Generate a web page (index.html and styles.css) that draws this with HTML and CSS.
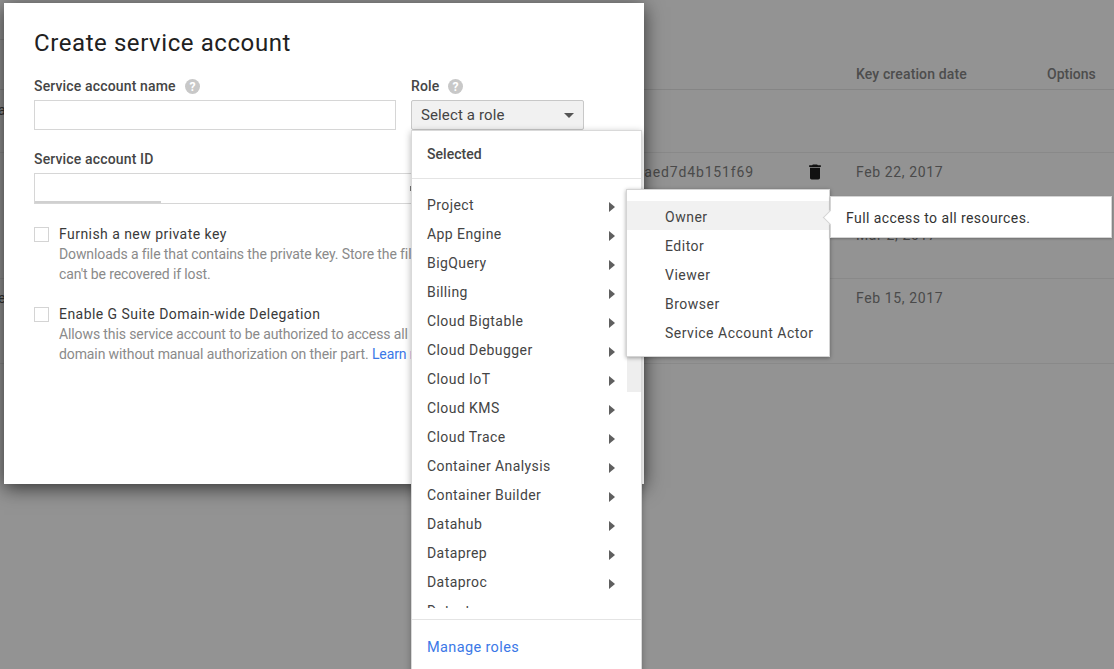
FILE: index.html
```html
<!DOCTYPE html>
<html lang="en">
<head>
<meta charset="utf-8">
<title>Create service account</title>
<link rel="stylesheet" href="styles.css">
</head>
<body>
<main class="page">
  <div class="top-rule"></div>
  <div class="table-head"><span class="col-date">Key creation date</span><span class="col-options">Options</span></div>
  <div class="row row-a"><span class="edge">a</span></div>
  <div class="row row-b">
    <span class="key-id">laed7d4b151f69</span>
    <svg class="trash" viewBox="0 0 24 24"><path d="M6 19c0 1.1.9 2 2 2h8c1.1 0 2-.9 2-2V7H6v12zM19 4h-3.5l-1-1h-5l-1 1H5v2h14V4z"/></svg>
    <span class="col-date">Feb 22, 2017</span>
    <span class="col-date second">Mar 2, 2017</span>
  </div>
  <div class="row row-c"><span class="edge">e</span><span class="col-date">Feb 15, 2017</span></div>
</main>

<section class="dialog">
  <h1 class="dialog-title">Create service account</h1>
  <div class="field-grid">
    <div class="field">
      <label class="field-label">Service account name
        <svg class="help" viewBox="0 0 16 16"><circle cx="8" cy="8" r="8"/><text x="8" y="12.5" text-anchor="middle">?</text></svg>
      </label>
      <div class="input"></div>
    </div>
    <div class="field">
      <label class="field-label">Role
        <svg class="help" viewBox="0 0 16 16"><circle cx="8" cy="8" r="8"/><text x="8" y="12.5" text-anchor="middle">?</text></svg>
      </label>
      <div class="select">Select a role<span class="caret"></span></div>
    </div>
  </div>
  <div class="field id-field">
    <label class="field-label">Service account ID</label>
    <div class="input input-id"><span class="id-rule"></span><span class="id-mark"></span></div>
  </div>
  <div class="check-row">
    <span class="checkbox"></span>
    <div class="check-text">
      <div class="check-title">Furnish a new private key</div>
      <div class="check-help">Downloads a file that contains the private key. Store the file securely because this key<br>can't be recovered if lost.</div>
    </div>
  </div>
  <div class="check-row">
    <span class="checkbox"></span>
    <div class="check-text">
      <div class="check-title">Enable G Suite Domain-wide Delegation</div>
      <div class="check-help">Allows this service account to be authorized to access all users' data in a G Suite<br>domain without manual authorization on their part. <a class="link">Learn more</a></div>
    </div>
  </div>
</section>

<div class="role-menu">
  <div class="selected-head">Selected</div>
  <div class="role-list">
    <div class="role-scroll">
      <div class="role-item">Project<span class="arrow"></span></div>
      <div class="role-item">App Engine<span class="arrow"></span></div>
      <div class="role-item">BigQuery<span class="arrow"></span></div>
      <div class="role-item">Billing<span class="arrow"></span></div>
      <div class="role-item">Cloud Bigtable<span class="arrow"></span></div>
      <div class="role-item">Cloud Debugger<span class="arrow"></span></div>
      <div class="role-item">Cloud IoT<span class="arrow"></span></div>
      <div class="role-item">Cloud KMS<span class="arrow"></span></div>
      <div class="role-item">Cloud Trace<span class="arrow"></span></div>
      <div class="role-item">Container Analysis<span class="arrow"></span></div>
      <div class="role-item">Container Builder<span class="arrow"></span></div>
      <div class="role-item">Datahub<span class="arrow"></span></div>
      <div class="role-item">Dataprep<span class="arrow"></span></div>
      <div class="role-item">Dataproc<span class="arrow"></span></div>
      <div class="role-item">Datastore<span class="arrow"></span></div>
      <span class="scroll-thumb"></span>
    </div>
  </div>
  <div class="manage"><a class="link">Manage roles</a></div>
</div>

<div class="sub-menu">
  <div class="sub-item active">Owner</div>
  <div class="sub-item">Editor</div>
  <div class="sub-item">Viewer</div>
  <div class="sub-item">Browser</div>
  <div class="sub-item">Service Account Actor</div>
</div>

<div class="tip">Full access to all resources.</div>
</body>
</html>
```
FILE: styles.css
```css
* { box-sizing: border-box; }
html, body { margin: 0; height: 100%; overflow: hidden; }
body { background: #939393; font-family: Roboto, "Liberation Sans", sans-serif; font-size: 14px; color: #212121; position: relative; width: 1114px; height: 669px; }

.page { display: flex; flex-direction: column; color: #4a4a4a; }
.top-rule { height: 40px; width: 10px; border-bottom: 1px solid #868686; }
.table-head { height: 50px; border-bottom: 1px solid #858585; padding-left: 856px; display: flex; align-items: center; padding-top: 18px; font-weight: 500; color: #4d4d4d; }
.table-head .col-date { width: 191px; letter-spacing: .13px; }
.row { position: relative; border-bottom: 1px solid #898989; }
.row-a { height: 63px; }
.row-b { height: 126px; }
.row-c { height: 85px; }
.row .col-date { position: absolute; left: 856px; top: 10px; letter-spacing: .62px; }
.row-b .col-date { top: 11px; }
.row-b .second { top: 74px; }
.row-c .col-date { top: 11px; }
.edge { position: absolute; left: -2px; top: 11px; color: #333; }
.row-a .edge { top: 12px; }
.key-id { position: absolute; left: 640px; top: 11px; letter-spacing: .85px; }
.trash { position: absolute; left: 805px; top: 9px; width: 20px; height: 20px; fill: #111; }

.dialog { position: absolute; left: 4px; top: 3px; width: 640px; height: 481px; background: #fff; padding: 24px 30px; box-shadow: 0 4px 18px rgba(0,0,0,.65); }
.dialog-title { margin: 0 0 17px; font-size: 24px; line-height: 32px; font-weight: 400; color: #212121; letter-spacing: .58px; }
.field-grid { display: grid; grid-template-columns: 362px 173px; column-gap: 15px; }
.field-label { display: flex; align-items: center; height: 20px; gap: 9px; font-weight: 500; color: #454545; margin-bottom: 4px; letter-spacing: .15px; }
.help { width: 15px; height: 15px; fill: #c8c8c8; }
.help text { fill: #fff; font-size: 13px; font-weight: 700; font-family: Roboto, sans-serif; }
.input { height: 30px; border: 1px solid #d6d6d6; background: #fff; }
.select { height: 30px; border: 1px solid #c8c8c8; border-radius: 2px; background: #f1f1f1; padding: 0 9px; display: flex; align-items: center; justify-content: space-between; font-size: 15px; color: #444; letter-spacing: .12px; }
.caret { width: 0; height: 0; border-left: 5px solid transparent; border-right: 5px solid transparent; border-top: 5px solid #555; }
.id-field { margin-top: 19px; }
.input-id { height: 31px; width: 600px; position: relative; }
.id-rule { position: absolute; left: 0; bottom: 0; width: 126px; height: 2px; background: #d0d0d0; }
.id-mark { position: absolute; left: 375px; top: 12px; width: 1px; height: 5px; background: #777; }
.check-row { display: flex; gap: 10px; margin-top: 20px; }
.checkbox { width: 15px; height: 15px; border: 1px solid #d4d4d4; margin-top: 3px; flex: none; }
.check-title { font-size: 14px; line-height: 20px; color: #3a3a3a; letter-spacing: .45px; }
.check-help { line-height: 20px; color: #8a8a8a; white-space: nowrap; letter-spacing: -.11px; }
.link { color: #3b78e7; }

.role-menu { position: absolute; left: 411px; top: 130px; width: 231px; height: 560px; background: #fff; border: 1px solid #d9d9d9; box-shadow: 0 2px 7px rgba(0,0,0,.3); }
.selected-head { height: 48px; border-bottom: 1px solid #e4e4e4; padding: 14px 15px 0; font-weight: 500; color: #454545; line-height: 18px; letter-spacing: .05px; }
.role-list { padding-bottom: 11px; border-bottom: 1px solid #e4e4e4; }
.role-scroll { height: 429px; overflow: hidden; padding-top: 12px; position: relative; }
.role-item { height: 29px; padding-left: 15px; line-height: 29px; letter-spacing: .42px; color: #444; position: relative; }
.arrow { position: absolute; left: 197px; top: 11px; width: 0; height: 0; border-top: 5.5px solid transparent; border-bottom: 5.5px solid transparent; border-left: 6px solid #5f5f5f; }
.scroll-thumb { position: absolute; right: 0; top: 11px; width: 14px; height: 202px; background: #eee; }
.manage { padding: 17px 15px 0; letter-spacing: .37px; line-height: 20px; }
.manage .link { font-size: 14.5px; }

.sub-menu { position: absolute; left: 626px; top: 189px; width: 204px; height: 168px; padding-top: 11px; background: #fff; border: 1px solid #d4d4d4; box-shadow: 0 1px 4px rgba(0,0,0,.35); }
.sub-item { height: 29px; line-height: 33px; padding-left: 38px; letter-spacing: .5px; color: #444; }
.sub-item.active { background: #f1f1f1; }

.tip { position: absolute; left: 830px; top: 196px; width: 282px; height: 42px; background: #fff; border: 1px solid #d4d4d4; padding-left: 15px; line-height: 42px; color: #333; letter-spacing: .42px; box-shadow: 0 1px 2px rgba(0,0,0,.25); }
.tip::before { content: ""; position: absolute; left: -6px; top: 15px; width: 10px; height: 10px; background: #fff; border-left: 1px solid #d4d4d4; border-bottom: 1px solid #d4d4d4; transform: rotate(45deg); }
```
